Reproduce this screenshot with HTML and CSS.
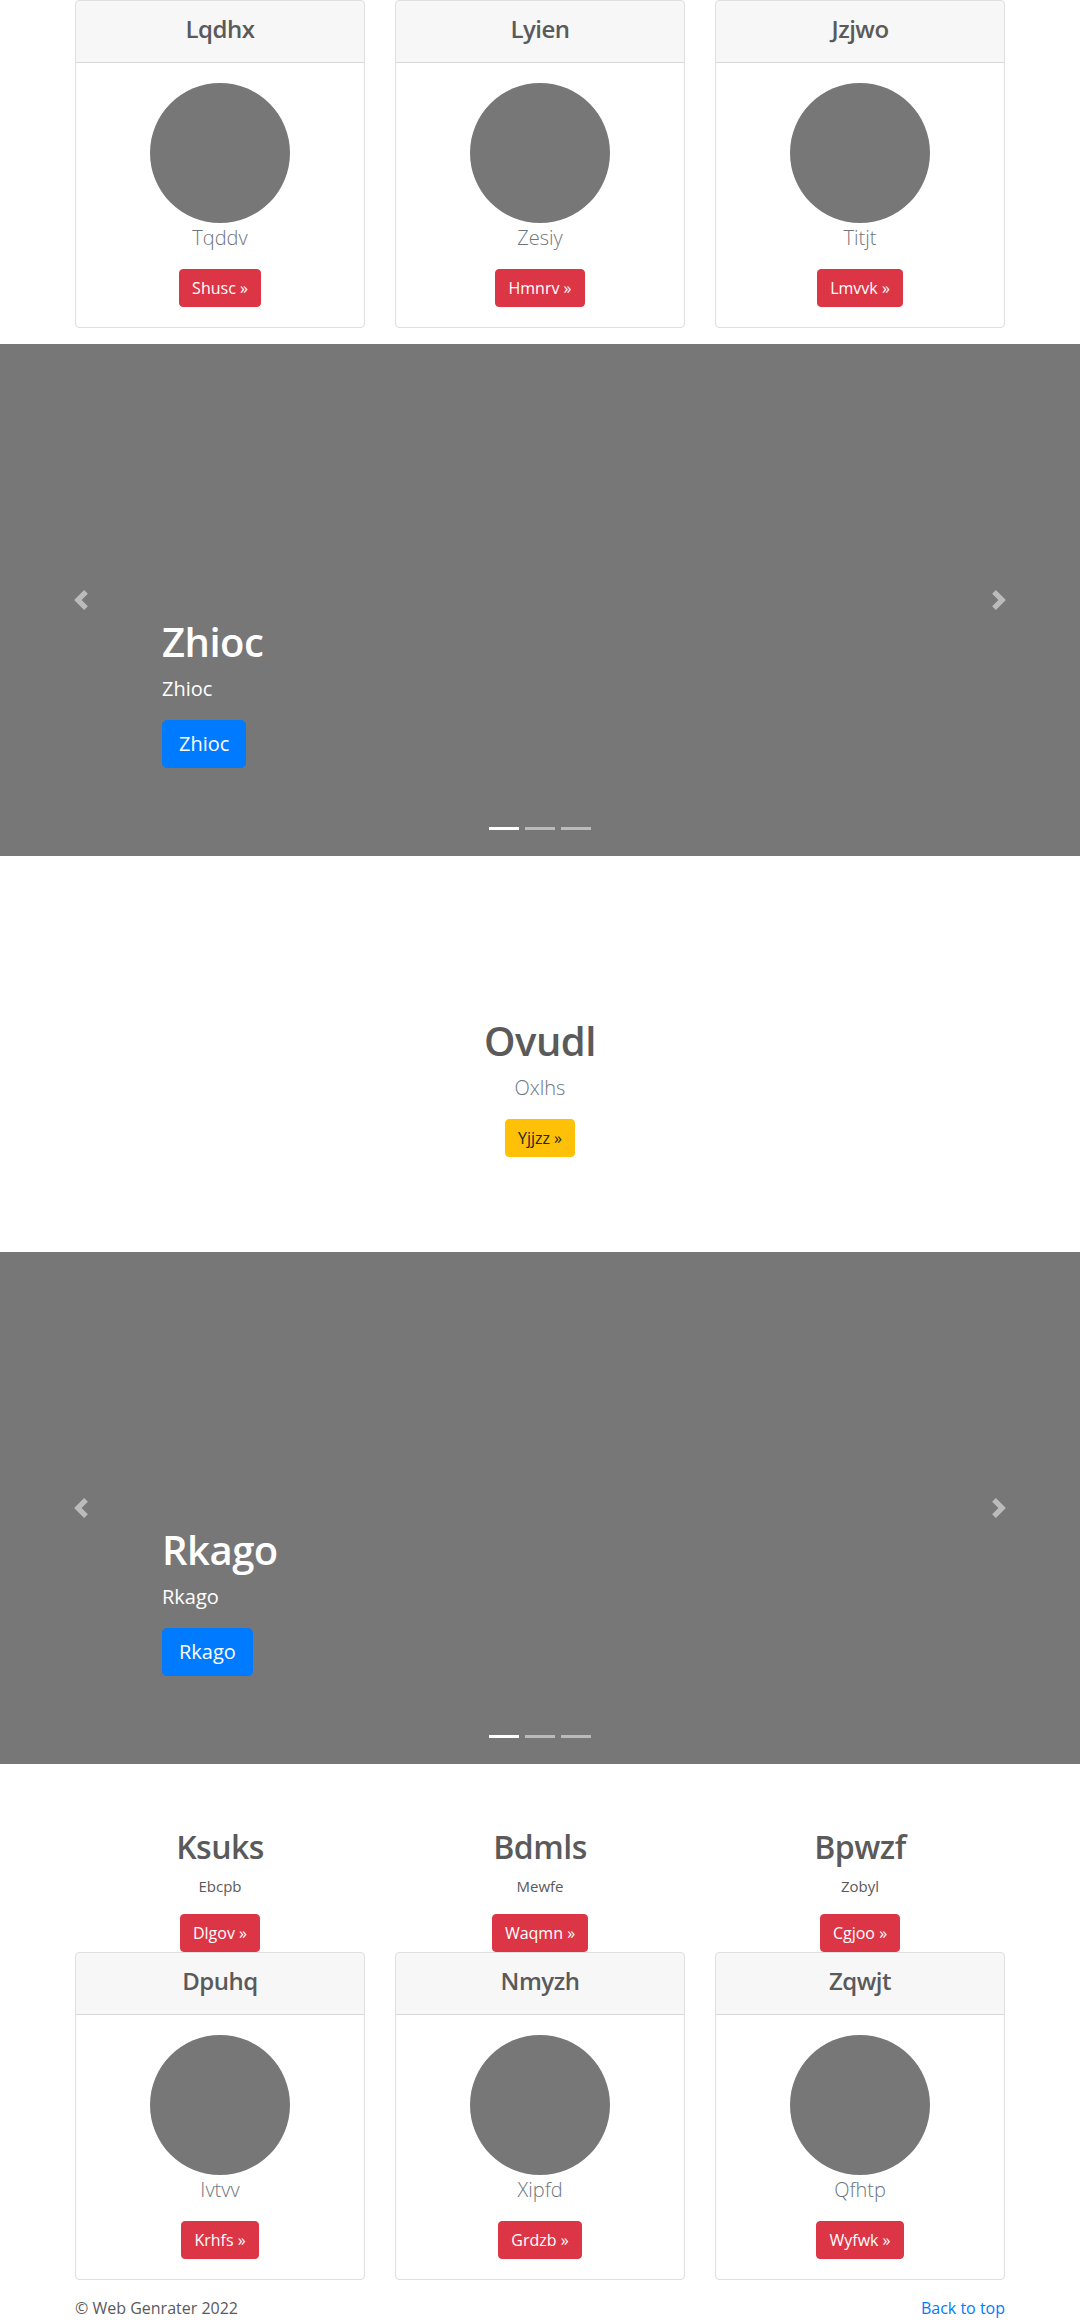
FILE: index.html
```html
<!DOCTYPE html>
<html lang="en">
<head>
<meta charset="utf-8">
<title>Web Genrater</title>
<link rel="stylesheet" href="styles.css">
</head>
<body>
<div class="container">
  <div class="card-row">
    <div class="card">
      <div class="card-header"><h4>Lqdhx</h4></div>
      <div class="card-body">
        <div class="avatar"></div>
        <p class="lead muted">Tqddv</p>
        <a class="btn btn-danger" href="#">Shusc &raquo;</a>
      </div>
    </div>
    <div class="card">
      <div class="card-header"><h4>Lyien</h4></div>
      <div class="card-body">
        <div class="avatar"></div>
        <p class="lead muted">Zesiy</p>
        <a class="btn btn-danger" href="#">Hmnrv &raquo;</a>
      </div>
    </div>
    <div class="card">
      <div class="card-header"><h4>Jzjwo</h4></div>
      <div class="card-body">
        <div class="avatar"></div>
        <p class="lead muted">Titjt</p>
        <a class="btn btn-danger" href="#">Lmvvk &raquo;</a>
      </div>
    </div>
  </div>
</div>

<div class="carousel">
  <div class="carousel-caption">
    <h1>Zhioc</h1>
    <p class="caption-text">Zhioc</p>
    <p class="caption-action"><a class="btn btn-lg btn-primary" href="#">Zhioc</a></p>
  </div>
  <a class="control control-prev" href="#"><svg width="20" height="20" viewBox="0 0 8 8"><path fill="#fff" d="M5.25 0l-4 4 4 4 1.5-1.5L4.25 4l2.5-2.5L5.25 0z"/></svg></a>
  <a class="control control-next" href="#"><svg width="20" height="20" viewBox="0 0 8 8"><path fill="#fff" d="M2.75 0l-1.5 1.5L3.75 4l-2.5 2.5L2.75 8l4-4-4-4z"/></svg></a>
  <ol class="indicators"><li class="active"></li><li></li><li></li></ol>
</div>

<section class="feature">
  <h1>Ovudl</h1>
  <p class="lead muted">Oxlhs</p>
  <p><a class="btn btn-warning" href="#">Yjjzz &raquo;</a></p>
</section>

<div class="carousel">
  <div class="carousel-caption">
    <h1>Rkago</h1>
    <p class="caption-text">Rkago</p>
    <p class="caption-action"><a class="btn btn-lg btn-primary" href="#">Rkago</a></p>
  </div>
  <a class="control control-prev" href="#"><svg width="20" height="20" viewBox="0 0 8 8"><path fill="#fff" d="M5.25 0l-4 4 4 4 1.5-1.5L4.25 4l2.5-2.5L5.25 0z"/></svg></a>
  <a class="control control-next" href="#"><svg width="20" height="20" viewBox="0 0 8 8"><path fill="#fff" d="M2.75 0l-1.5 1.5L3.75 4l-2.5 2.5L2.75 8l4-4-4-4z"/></svg></a>
  <ol class="indicators"><li class="active"></li><li></li><li></li></ol>
</div>

<div class="container marketing">
  <div class="cols">
    <div class="col">
      <h2>Ksuks</h2>
      <p>Ebcpb</p>
      <a class="btn btn-danger" href="#">Dlgov &raquo;</a>
    </div>
    <div class="col">
      <h2>Bdmls</h2>
      <p>Mewfe</p>
      <a class="btn btn-danger" href="#">Waqmn &raquo;</a>
    </div>
    <div class="col">
      <h2>Bpwzf</h2>
      <p>Zobyl</p>
      <a class="btn btn-danger" href="#">Cgjoo &raquo;</a>
    </div>
  </div>
  <div class="card-row">
    <div class="card">
      <div class="card-header"><h4>Dpuhq</h4></div>
      <div class="card-body">
        <div class="avatar"></div>
        <p class="lead muted">Ivtvv</p>
        <a class="btn btn-danger" href="#">Krhfs &raquo;</a>
      </div>
    </div>
    <div class="card">
      <div class="card-header"><h4>Nmyzh</h4></div>
      <div class="card-body">
        <div class="avatar"></div>
        <p class="lead muted">Xipfd</p>
        <a class="btn btn-danger" href="#">Grdzb &raquo;</a>
      </div>
    </div>
    <div class="card">
      <div class="card-header"><h4>Zqwjt</h4></div>
      <div class="card-body">
        <div class="avatar"></div>
        <p class="lead muted">Qfhtp</p>
        <a class="btn btn-danger" href="#">Wyfwk &raquo;</a>
      </div>
    </div>
  </div>
</div>

<footer class="container footer">
  <p>&copy; Web Genrater 2022</p>
  <p><a href="#">Back to top</a></p>
</footer>
</body>
</html>
```
FILE: styles.css
```css
* { box-sizing: border-box; }
html, body { margin: 0; padding: 0; }
body {
  font-family: "Open Sans", "Noto Sans", "DejaVu Sans", sans-serif;
  font-size: 16px;
  line-height: 1.5;
  color: #5a5a5a;
  background: #fff;
}
h1, h2, h4, p { margin: 0; }
h1, h2, h4 { line-height: 1.2; font-weight: 600; margin-bottom: 8px; letter-spacing: -0.5px; }
h1 { font-size: 40px; }
h2 { font-size: 32px; }
h4 { font-size: 24px; }
a { color: #007bff; text-decoration: none; }

.container { width: 930px; margin: 0 auto; }

.card-row {
  display: grid;
  grid-template-columns: repeat(3, 1fr);
  column-gap: 30px;
}
.card {
  border: 1px solid rgba(0,0,0,.125);
  border-radius: 4px;
  margin-bottom: 16px;
  text-align: center;
  overflow: hidden;
}
.card-header {
  background: rgba(0,0,0,.03);
  border-bottom: 1px solid rgba(0,0,0,.125);
  padding: 14px 20px 10px;
}
.card-body { padding: 20px; }
.avatar {
  width: 140px; height: 140px;
  border-radius: 50%;
  background: #777;
  margin: 0 auto;
}
.lead { font-size: 20px; font-weight: 300; line-height: 1.5; margin-bottom: 16px; }
.muted { color: #6c757d; }

.btn {
  display: inline-block;
  padding: 6px 12px;
  font-size: 16px;
  line-height: 1.5;
  border: 1px solid transparent;
  border-radius: 4px;
  vertical-align: middle;
}
.btn-lg { padding: 8px 16px; font-size: 20px; border-radius: 4.8px; }
.btn-danger { background: #dc3545; border-color: #dc3545; color: #fff; }
.btn-primary { background: #007bff; border-color: #007bff; color: #fff; }
.btn-warning { background: #ffc107; border-color: #ffc107; color: #212529; }

.carousel {
  position: relative;
  height: 512px;
  background: #777;
  overflow: hidden;
}
.carousel-caption {
  position: absolute;
  left: 15%; right: 15%;
  bottom: 48px;
  padding: 20px 0;
  color: #fff;
  text-align: left;
}
.carousel-caption h1 { color: #fff; }
.caption-text { font-size: 20px; line-height: 1.5; margin-bottom: 16px; }
.caption-action { margin-bottom: 20px; line-height: 1; }
.control {
  position: absolute;
  top: 0; bottom: 0;
  width: 15%;
  display: flex;
  align-items: center;
  justify-content: center;
  opacity: .5;
}
.control svg { display: block; }
.control-prev { left: 0; }
.control-next { right: 0; }
.indicators {
  position: absolute;
  left: 0; right: 0; bottom: 0;
  margin: 0 0 16px;
  padding: 0;
  list-style: none;
  display: flex;
  justify-content: center;
}
.indicators li {
  width: 30px;
  height: 3px;
  margin: 0 3px;
  box-sizing: content-box;
  border-top: 10px solid transparent;
  border-bottom: 10px solid transparent;
  background: #fff;
  background-clip: padding-box;
  opacity: .5;
}
.indicators li.active { opacity: 1; }

.feature {
  height: 396px;
  padding-top: 161px;
  text-align: center;
}

.marketing { padding-top: 64px; }
.cols {
  display: grid;
  grid-template-columns: repeat(3, 1fr);
  column-gap: 30px;
  text-align: center;
}
.cols p { margin: 0 12px 16px; font-size: 15px; line-height: 24px; }

.footer {
  display: flex;
  justify-content: space-between;
}
```
